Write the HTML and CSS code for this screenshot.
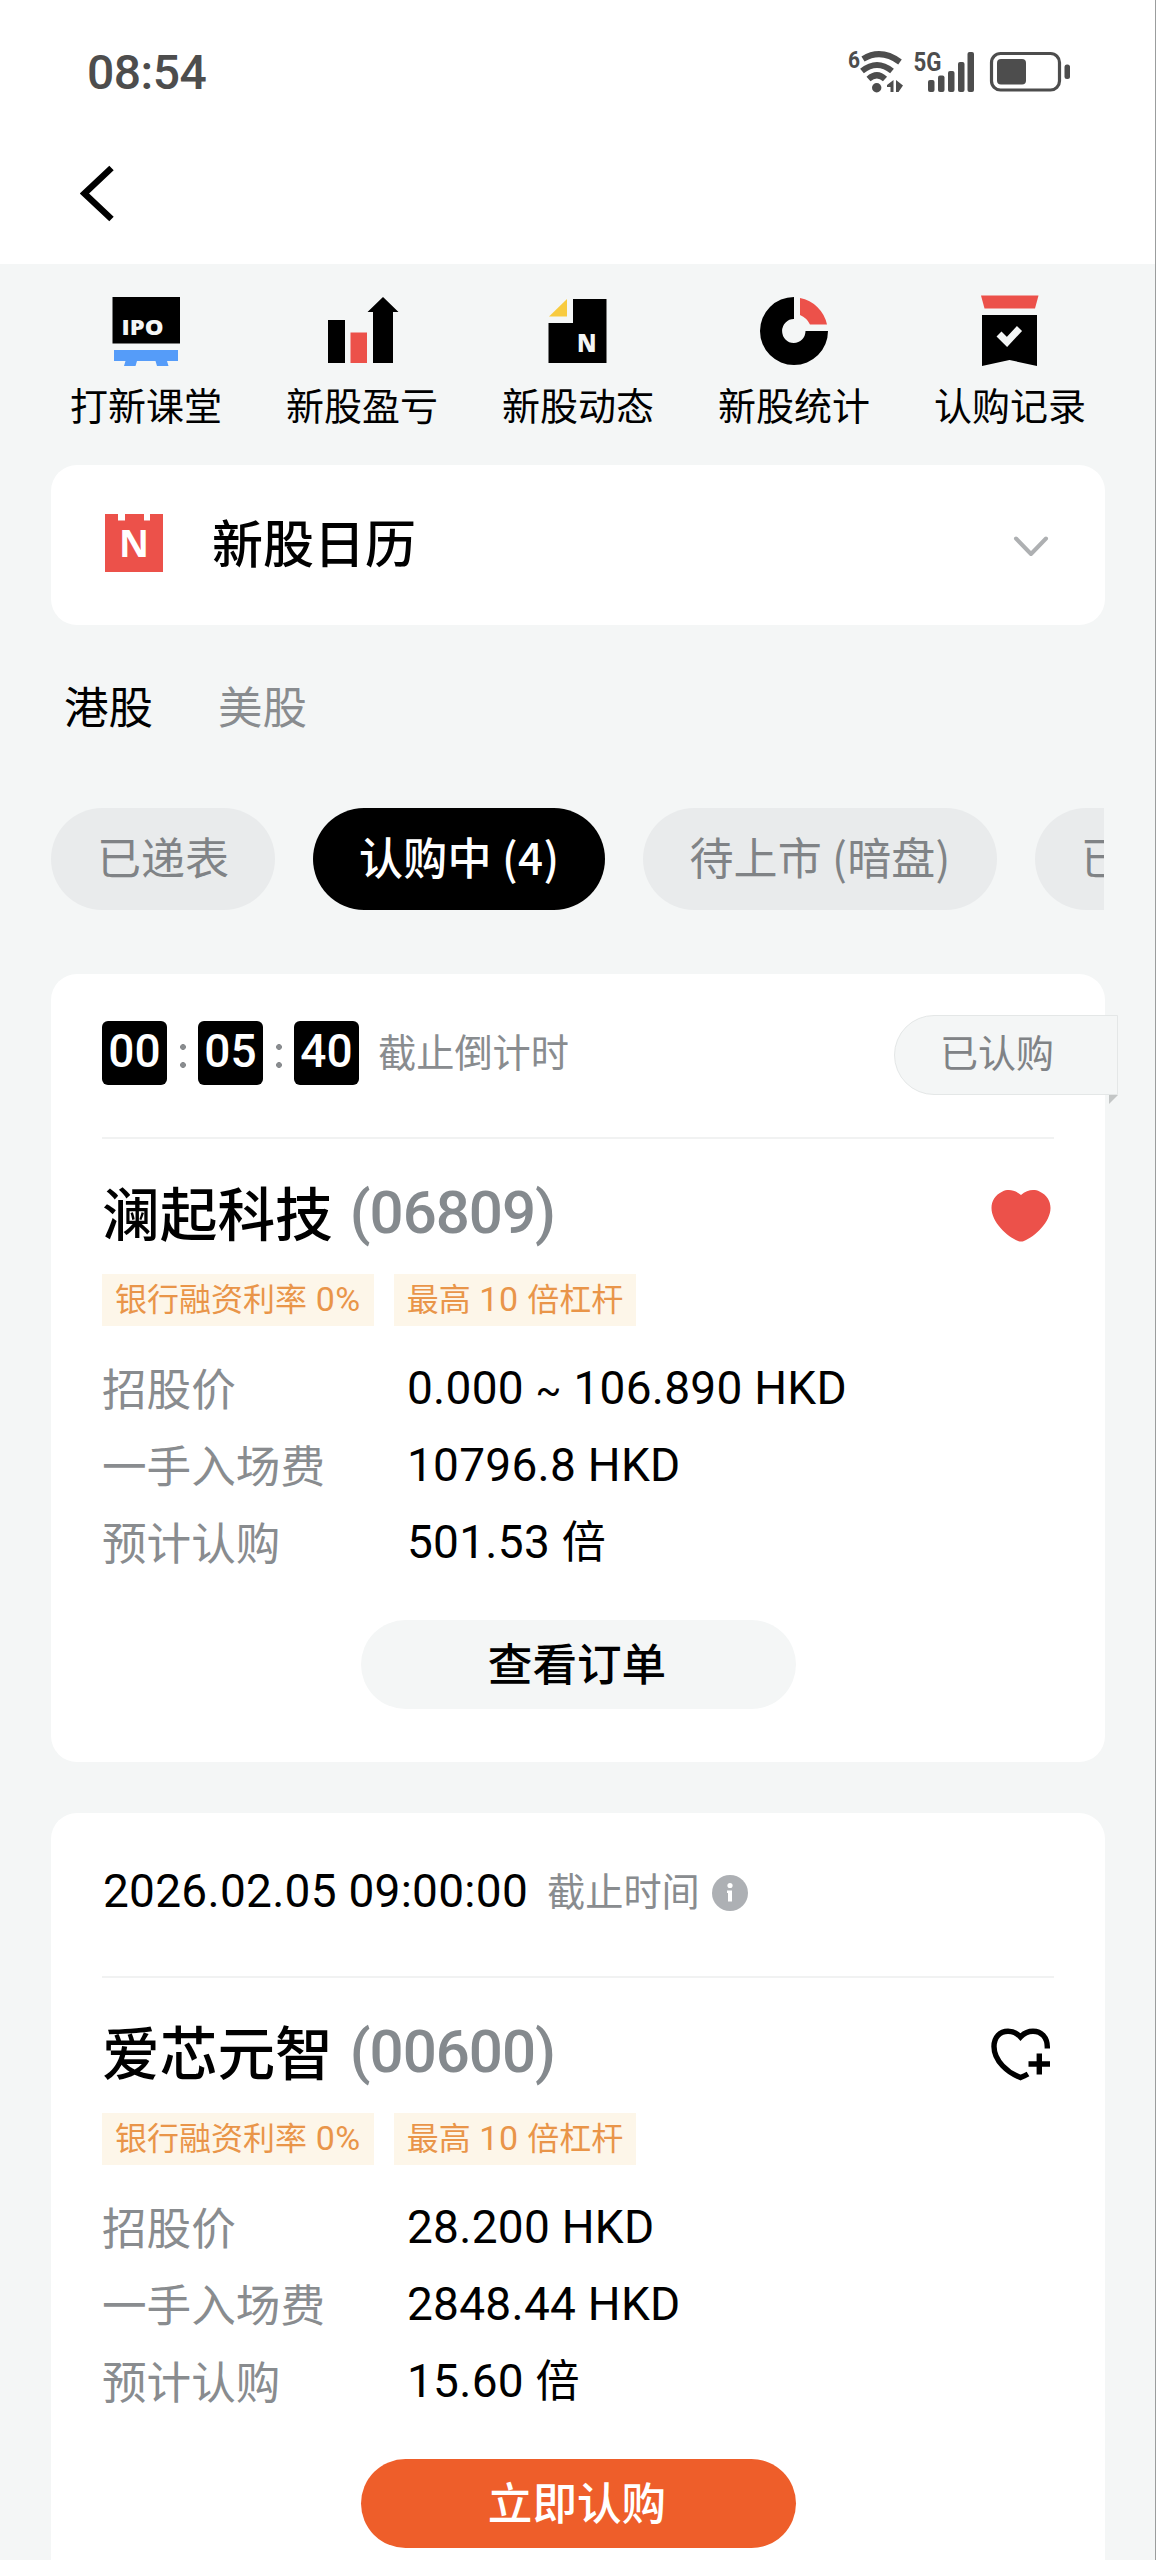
FILE: index.html
```html
<!DOCTYPE html>
<html lang="zh-CN">
<head>
<meta charset="utf-8">
<title>新股</title>
<link rel="stylesheet" href="styles.css">
</head>
<body>
<div class="screen">
  <header class="top">
    <div class="status">
      <span class="clock">08:54</span>
      <svg class="status-icons" width="236" height="52" viewBox="840 44 236 52">
        <g fill="none" stroke="#4d4d4d" stroke-width="6" stroke-linecap="butt">
          <path d="M863 59 Q881 48 900 62"/>
          <path d="M862 71 Q877 59 892 71"/>
          <path d="M868.500 79 Q877 71.500 885 79"/>
        </g>
        <circle cx="876.700" cy="87.700" r="4.700" fill="#4d4d4d"/>
        <path d="M893.500 80V92H890.500V87H887V85ZM896 80L903 85.500L898.500 92H896Z" fill="#4d4d4d"/>
        <g class="status-text">
          <text x="848" y="68" font-size="24" textLength="12" lengthAdjust="spacingAndGlyphs">6</text>
          <text x="913.500" y="71" font-size="26" textLength="28" lengthAdjust="spacingAndGlyphs">5G</text>
        </g>
        <g fill="#4d4d4d">
          <rect x="928" y="80" width="6.500" height="12" rx="2"/>
          <rect x="938" y="75.500" width="6.500" height="16.500" rx="2"/>
          <rect x="948" y="71" width="6.500" height="21" rx="2"/>
          <rect x="958" y="62" width="6.500" height="30" rx="2"/>
          <rect x="967.500" y="52" width="6.500" height="40" rx="2"/>
          <rect x="997" y="59" width="29" height="25.500" rx="4"/>
          <rect x="1064.500" y="64.500" width="5.500" height="14.500" rx="2.500"/>
        </g>
        <rect x="991.500" y="53.500" width="68" height="36.500" rx="9" fill="none" stroke="#4d4d4d" stroke-width="3.200"/>
      </svg>
    </div>
    <svg class="back" width="36" height="60" viewBox="80 164 36 60"><path d="M111.500 168L84.500 193.500L111.500 219" fill="none" stroke="#000" stroke-width="6.400"/></svg>
  </header>

  <nav class="shortcuts">
    <a class="shortcut">
      <svg width="80" height="80" viewBox="106 291 80 80">
        <rect x="112.500" y="297" width="67.500" height="46.500"/>
        <text class="badge-text" x="121.500" y="335" font-size="21" textLength="42" lengthAdjust="spacingAndGlyphs">IPO</text>
        <path d="M114 350H178V361H167L168.500 366H157L155.500 361H137L135.500 366H124L125.500 361H114Z" fill="#559cf9"/>
      </svg>
      <span>打新课堂</span>
    </a>
    <a class="shortcut">
      <svg width="80" height="80" viewBox="322 291 80 80">
        <rect x="328" y="320" width="17" height="43"/>
        <rect x="350.500" y="332.500" width="16.500" height="30.500" fill="#ec514a"/>
        <path d="M383 297L398.500 312H393V363H373V312H367.500Z"/>
      </svg>
      <span>新股盈亏</span>
    </a>
    <a class="shortcut">
      <svg width="80" height="80" viewBox="538 291 80 80">
        <path d="M573 299H606.500V363H548.500V323H573Z"/>
        <path d="M567 299V316.500H549Z" fill="#f8cb3f"/>
        <text class="badge-text" x="577" y="352" font-size="24" textLength="19.500" lengthAdjust="spacingAndGlyphs">N</text>
      </svg>
      <span>新股动态</span>
    </a>
    <a class="shortcut">
      <svg width="80" height="80" viewBox="754 291 80 80">
        <path d="M794 297A34 34 0 1 0 828 331H805.500A11.700 12 0 1 1 794 319Z"/>
        <path d="M800 298A34 34 0 0 1 827 324.500H810Q807 318 800 315Z" fill="#ec514a"/>
      </svg>
      <span>新股统计</span>
    </a>
    <a class="shortcut">
      <svg width="80" height="80" viewBox="970 291 80 80">
        <path d="M981 295.500H1038.500L1035 308.500H984.500Z" fill="#ec514a"/>
        <path d="M982 315H1037V366L1009.500 360L982 366Z"/>
        <path d="M999 334L1007 342L1019.500 328.500" fill="none" stroke="#f4f6f6" stroke-width="7"/>
      </svg>
      <span>认购记录</span>
    </a>
  </nav>

  <section class="calendar">
    <svg width="58" height="58" viewBox="0 0 58 58">
      <path d="M0 0H13V6.500H20V0H39V6.500H45V0H58V58H0Z" fill="#ec514a"/>
      <text class="calendar-letter" x="14" y="42.500" font-size="37" textLength="30" lengthAdjust="spacingAndGlyphs">N</text>
    </svg>
    <h2>新股日历</h2>
    <svg class="chevron" width="38" height="24" viewBox="0 0 38 24"><path d="M4 4.500L19 20L34 4.500" fill="none" stroke="#aeb0b2" stroke-width="4" stroke-linecap="round" stroke-linejoin="round"/></svg>
  </section>

  <div class="markets">
    <span class="market market-on">港股</span>
    <span class="market">美股</span>
  </div>

  <div class="filters">
    <span class="filter">已递表</span>
    <span class="filter filter-on">认购中 (4)</span>
    <span class="filter filter-wide">待上市 (暗盘)</span>
    <span class="filter">已上市</span>
  </div>

  <main class="cards">
    <article class="card">
      <div class="card-head">
        <div class="countdown">
          <b>00</b><i></i><b>05</b><i></i><b>40</b>
        </div>
        <span class="hint">截止倒计时</span>
        <div class="ribbon">已认购</div>
      </div>
      <div class="card-title">
        <h3>澜起科技</h3><span class="code">(06809)</span>
        <svg class="heart" width="60" height="54" viewBox="0 0 60 54"><path d="M30 6C24 0.500 16.500 0 11.500 2.500C4 6 .5 12 .5 19C.5 33 16 47.500 27 52Q30 53.200 33 52C44 47.500 59.500 33 59.500 19C59.500 12 56 6 48.500 2.500C43.500 0 36 .5 30 6Z" fill="#ec514a"/></svg>
      </div>
      <div class="tags"><span class="tag">银行融资利率 <em>0%</em></span><span class="tag">最高 <em>10</em> 倍杠杆</span></div>
      <dl class="facts">
        <dt>招股价</dt><dd>0.000 <span class="tilde">~</span> 106.890 HKD</dd>
        <dt>一手入场费</dt><dd>10796.8 HKD</dd>
        <dt>预计认购</dt><dd>501.53 <small>倍</small></dd>
      </dl>
      <button class="action">查看订单</button>
    </article>

    <article class="card">
      <div class="card-head">
        <span class="deadline">2026.02.05 09:00:00</span>
        <span class="hint hint-time">截止时间</span>
        <svg class="info" width="36" height="36" viewBox="0 0 36 36"><circle cx="18" cy="18" r="18" fill="#adb0b4"/><path d="M15 15.500H20V26.500H16V18H15Z" fill="#fff"/><circle cx="18" cy="10.500" r="2.600" fill="#fff"/></svg>
      </div>
      <div class="card-title">
        <h3>爱芯元智</h3><span class="code">(00600)</span>
        <svg class="heart" width="60" height="54" viewBox="0 0 60 54"><path d="M56.300 20.500C56.800 9 50 3.200 42 3.200C37 3.200 33 5 29.500 9C26 5 22 3.200 17 3.200C9 3.200 3 9 3 18.500C3 33 17 45 29.500 49.500Q33.500 48 37 46" fill="none" stroke="#000" stroke-width="5.400"/><path d="M48.300 25.500V46.500M37.500 36H59" fill="none" stroke="#000" stroke-width="5.400"/></svg>
      </div>
      <div class="tags"><span class="tag">银行融资利率 <em>0%</em></span><span class="tag">最高 <em>10</em> 倍杠杆</span></div>
      <dl class="facts">
        <dt>招股价</dt><dd>28.200 HKD</dd>
        <dt>一手入场费</dt><dd>2848.44 HKD</dd>
        <dt>预计认购</dt><dd>15.60 <small>倍</small></dd>
      </dl>
      <button class="action action-primary">立即认购</button>
    </article>
  </main>
</div>
</body>
</html>
```
FILE: styles.css
```css
* {
  box-sizing: border-box;
}

body {
  margin: 0;
  font-family: "Noto Sans CJK SC", sans-serif;
  color: #000;
}

h2, h3, dl, dt, dd {
  margin: 0;
  font-weight: 500;
}

svg {
  display: block;
  flex: none;
}

.screen {
  width: 1156px;
  height: 2560px;
  overflow: hidden;
  background: #f4f6f6;
  border-right: 1px solid #9b9d9d;
}

.top {
  height: 264px;
  padding: 44px 79px 0;
  background: #fff;
}

.status {
  display: flex;
  justify-content: space-between;
  height: 52px;
  padding-left: 8px;
}

.clock {
  font: 500 48px/58px Roboto, sans-serif;
  color: #4d4d4d;
  letter-spacing: -0.5px;
}

.status-text {
  font-family: Roboto, sans-serif;
  font-weight: 700;
  fill: #4d4d4d;
}

.back {
  margin: 68px 0 0 1px;
}

.shortcuts {
  display: grid;
  grid-template-columns: repeat(5, 216px);
  padding: 27px 37px 0 38px;
  height: 201px;
}

.shortcut {
  display: flex;
  flex-direction: column;
  align-items: center;
  font-size: 38px;
  line-height: 65px;
}

.badge-text {
  font-family: "Open Sans", sans-serif;
  font-weight: 800;
  fill: #f4f6f6;
}

.calendar {
  display: flex;
  align-items: center;
  height: 160px;
  margin: 0 50px 0 51px;
  padding: 0 55px 4px 54px;
  background: #fff;
  border-radius: 26px;
}

.calendar-letter {
  font-family: "Noto Sans", sans-serif;
  font-weight: 700;
  fill: #fff;
}

.calendar h2 {
  margin-left: 49px;
  padding-bottom: 4px;
  font-size: 51px;
  line-height: 74px;
}

.chevron {
  margin: 6px 0 0 auto;
}

.markets {
  display: flex;
  gap: 65px;
  padding: 48px 64px 0;
  height: 183px;
  font-size: 44.500px;
  line-height: 64px;
}

.market {
  color: #898c8f;
}

.market-on {
  color: #000;
}

.filters {
  display: flex;
  gap: 38px;
  height: 102px;
  margin: 0 51px;
  overflow: hidden;
}

.filter {
  flex: none;
  height: 102px;
  padding: 0 46px;
  border-radius: 51px;
  background: #e9ebec;
  color: #808386;
  font-size: 44px;
  line-height: 96px;
  white-space: nowrap;
}

.filter-on {
  background: #000;
  color: #fff;
  font-weight: 500;
  letter-spacing: 0.3px;
}

.filter-wide {
  letter-spacing: 0.2px;
}

.cards {
  display: grid;
  gap: 51px;
  margin: 64px 50px 0 51px;
}

.card {
  height: 788px;
  padding: 0 51px;
  background: #fff;
  border-radius: 26px;
}

.card-head {
  display: flex;
  align-items: center;
  height: 165px;
  padding-bottom: 5px;
  border-bottom: 2px solid #f1f2f2;
}

.countdown {
  display: flex;
  align-items: center;
}

.countdown b {
  width: 65px;
  height: 64px;
  border-radius: 6px;
  background: #000;
  color: #fff;
  font: 500 46px/60px Roboto, sans-serif;
  text-align: center;
}

.countdown i {
  width: 6px;
  height: 24px;
  margin: 6px 12.500px 0;
  background: radial-gradient(circle at 3px 3px, #898c8f 2.6px, transparent 3.2px) 0 0 / 6px 18px;
}

.hint {
  margin-left: 19px;
  padding-bottom: 4px;
  color: #898c8f;
  font-size: 38.200px;
  line-height: 56px;
}

.ribbon {
  position: relative;
  width: 224px;
  height: 80px;
  margin: 4px -64px 0 auto;
  padding-left: 45px;
  border: 1px solid #e4e7e7;
  border-radius: 40px 0 0 40px;
  background: #f4f6f6;
  color: #808386;
  font-size: 38px;
  line-height: 70px;
}

.ribbon::after {
  content: "";
  position: absolute;
  top: 79px;
  right: -1px;
  border-style: solid;
  border-width: 9px 9px 0 0;
  border-color: #c3c6c6 transparent transparent;
}

.deadline {
  margin-left: 1px;
  padding-bottom: 3px;
  font: 400 46px/56px Roboto, sans-serif;
  letter-spacing: 0.27px;
}

.info {
  margin: 2px 0 0 12px;
}

.card-title {
  display: flex;
  align-items: center;
  height: 135px;
  padding-top: 12px;
}

.card-title h3 {
  padding-bottom: 4px;
  font-size: 57.700px;
  line-height: 84px;
}

.code {
  margin-left: 17px;
  font: 500 60px/84px Roboto, sans-serif;
  letter-spacing: -1px;
  color: #858a8e;
}

.heart {
  margin: 7px 3px 0 auto;
}

.tags {
  display: flex;
  gap: 20px;
}

.tag {
  height: 52px;
  padding: 0 13px;
  background: #fdf6e9;
  color: #e99549;
  font-size: 32px;
  line-height: 47px;
  white-space: nowrap;
  word-spacing: 1.5px;
}

.tag em {
  font: 400 34px/40px Roboto, sans-serif;
  letter-spacing: 0.5px;
}

.facts {
  display: grid;
  grid-template-columns: 304px 1fr;
  grid-auto-rows: 77px;
  margin-top: 23px;
  font-size: 44.600px;
  line-height: 75px;
}

.facts dt {
  color: #898c8f;
  font-weight: 400;
}

.facts dd {
  padding-left: 1px;
  font: 400 46px/78px Roboto, sans-serif;
  letter-spacing: 0.27px;
}

.facts .tilde {
  font-size: 38px;
}

.facts small {
  font: 400 44px/70px "Noto Sans CJK SC", sans-serif;
}

.action {
  display: block;
  width: 435px;
  height: 89px;
  margin: 40px auto 0;
  padding: 0 2px 5px 0;
  border: 0;
  border-radius: 45px;
  background: #f4f6f6;
  color: #000;
  font: 500 44.600px/84px "Noto Sans CJK SC", sans-serif;
}

.action-primary {
  background: #ee5e2a;
  color: #fff;
}
```
